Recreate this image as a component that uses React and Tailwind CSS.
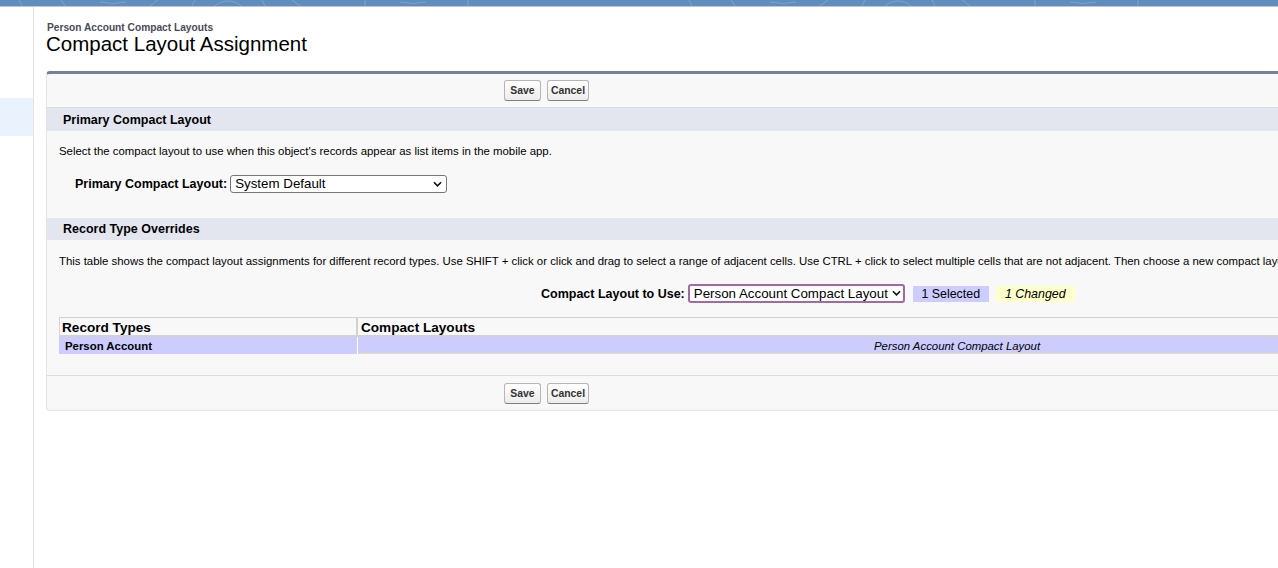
import React from "react";

const FONT = "font-['Liberation_Sans',Arial,sans-serif]";

function Buttons({ className }) {
  return (
    <div className={`flex gap-[6px] pl-[457px] ${className}`}>
      <button className="w-[37px] h-[21px] pt-[2px] border border-[#b5b5b5] border-b-[#7f7f7f] rounded-[3px] bg-gradient-to-b from-white to-[#ececec] text-[10.4px] leading-none font-bold text-[#333]">
        Save
      </button>
      <button className="w-[42px] h-[21px] pt-[2px] border border-[#b5b5b5] border-b-[#7f7f7f] rounded-[3px] bg-gradient-to-b from-white to-[#ececec] text-[10.4px] leading-none font-bold text-[#333]">
        Cancel
      </button>
    </div>
  );
}

function Chevron({ className }) {
  return (
    <svg viewBox="0 0 10 6" className={className} fill="none" stroke="#111" strokeWidth="1.8">
      <path d="M1 1l4 4 4-4" />
    </svg>
  );
}

// the faint swirl texture of the header, it repeats about every 670px
function TopPattern() {
  const offsets = [0, 670];
  return (
    <svg className="block w-full h-[6px]" viewBox="0 0 1278 6">
      <rect width="1278" height="6" fill="#5f8dbd" />
      <g fill="none" stroke="#7ea3ca" strokeWidth="1">
        {offsets.map((o) => (
          <g key={o} transform={`translate(${o} 0)`}>
            <circle cx="228" cy="21" r="20" />
            <path d="M192 6l3-6M265 6l-3-6" />
            <path d="M100 2q13 3 26 0M400 2q13 3 26 0" />
            <path d="M22 6l-3-6M65 6l-4-6M365 6V0M468 6V0M150 6l8-6M300 6l-8-6" />
          </g>
        ))}
      </g>
    </svg>
  );
}

export default function App() {
  return (
    <div className={`h-[568px] w-[1278px] overflow-hidden bg-white text-black ${FONT}`}>
      <TopPattern />
      <div className="h-px bg-[#bfc5cc]" />
      <div className="flex h-[561px]">
        {/* left rail */}
        <div className="w-[34px] shrink-0 border-r border-[#e2e3e5] pt-[91px]">
          <div className="h-[38px] bg-[#eaf3fd]" />
        </div>

        {/* page */}
        <div className="pl-3 pt-[15px] w-[1400px] shrink-0">
          <div className="text-[10.2px] leading-[11px] font-bold text-[#4a4a56] pl-px">Person Account Compact Layouts</div>
          <h1 className="text-[20.5px] leading-[22px] font-normal">Compact Layout Assignment</h1>

          <div className="mt-[16px] w-[1400px] border-t-[3px] border-t-[#76809a] border border-[#e4e4e4] rounded-[4px] bg-[#f8f8f8]">
            <Buttons className="pt-[6px] pb-[6px] border-b border-[#dcdcdc]" />

            <div className="h-[23px] bg-[#e3e6ef] pl-4 text-[12.5px] leading-[25px] font-bold">Primary Compact Layout</div>
            <p className="pl-3 pt-[14px] text-[11.4px] leading-[13px]">
              Select the compact layout to use when this object's records appear as list items in the mobile app.
            </p>
            <div className="flex items-start pl-7 pt-[17px] h-[60px]">
              <label className="text-[12.5px] font-bold leading-[18px] mr-[3px]">Primary Compact Layout:</label>
              <div className="relative">
                <select className="block appearance-none w-[217px] h-[18px] pl-1 border border-[#767676] rounded-[3px] bg-white text-[13.33px] leading-[16px]">
                  <option>System Default</option>
                </select>
                <Chevron className="absolute right-[5px] top-[6px] w-[9px] h-[6px] pointer-events-none" />
              </div>
            </div>

            <div className="h-[22px] bg-[#e3e6ef] pl-4 text-[12.5px] leading-[23px] font-bold">Record Type Overrides</div>
            <p className="pl-3 pt-[15px] text-[11.4px] leading-[13px] whitespace-nowrap">
              This table shows the compact layout assignments for different record types. Use SHIFT + click or click and drag to select a range of adjacent cells. Use CTRL + click to select multiple cells that are not adjacent. Then choose a new compact layout from the list.
            </p>

            <div className="flex items-center pl-[494px] pt-[16px]">
              <label className="text-[12.5px] font-bold leading-[18px] mr-[3px]">Compact Layout to Use:</label>
              <div className="relative">
                <select className="block appearance-none w-[217px] h-[19px] pl-1 border-2 border-[#a268a8] rounded-[3px] bg-white text-[13.33px] leading-[15px]">
                  <option>Person Account Compact Layout</option>
                </select>
                <Chevron className="absolute right-[4px] top-[6px] w-[9px] h-[6px] pointer-events-none" />
              </div>
              <span className="ml-2 w-[76px] h-4 bg-[#ccccff] text-center text-[12.4px] leading-4">1 Selected</span>
              <span className="ml-[7px] w-[79px] h-4 bg-[#ffffcc] text-center text-[12.4px] leading-4 italic">1 Changed</span>
            </div>

            <div className="mt-[14px] ml-3 flex">
              <div className="w-[299px] shrink-0">
                <div className="h-[20px] border-t border-l border-r-2 border-b-2 border-[#d2d2d2] pl-[2px] text-[13.6px] leading-[20px] font-bold">Record Types</div>
                <div className="h-[17px] bg-[#ccccff] border-r border-white pl-[6px] text-[11.4px] leading-[18px] font-bold">Person Account</div>
              </div>
              <div className="flex-1">
                <div className="h-[20px] border-t border-b-2 border-[#d2d2d2] pl-[3px] text-[13.6px] leading-[20px] font-bold">Compact Layouts</div>
                <div className="h-[17px] bg-[#ccccff] border-b border-[#e8e0a8] text-[11.4px] leading-[18px] italic pl-[516px]">Person Account Compact Layout</div>
              </div>
            </div>

            <Buttons className="mt-[21px] pt-[7px] pb-[6px] border-t border-[#dcdcdc]" />
          </div>
        </div>
      </div>
    </div>
  );
}
